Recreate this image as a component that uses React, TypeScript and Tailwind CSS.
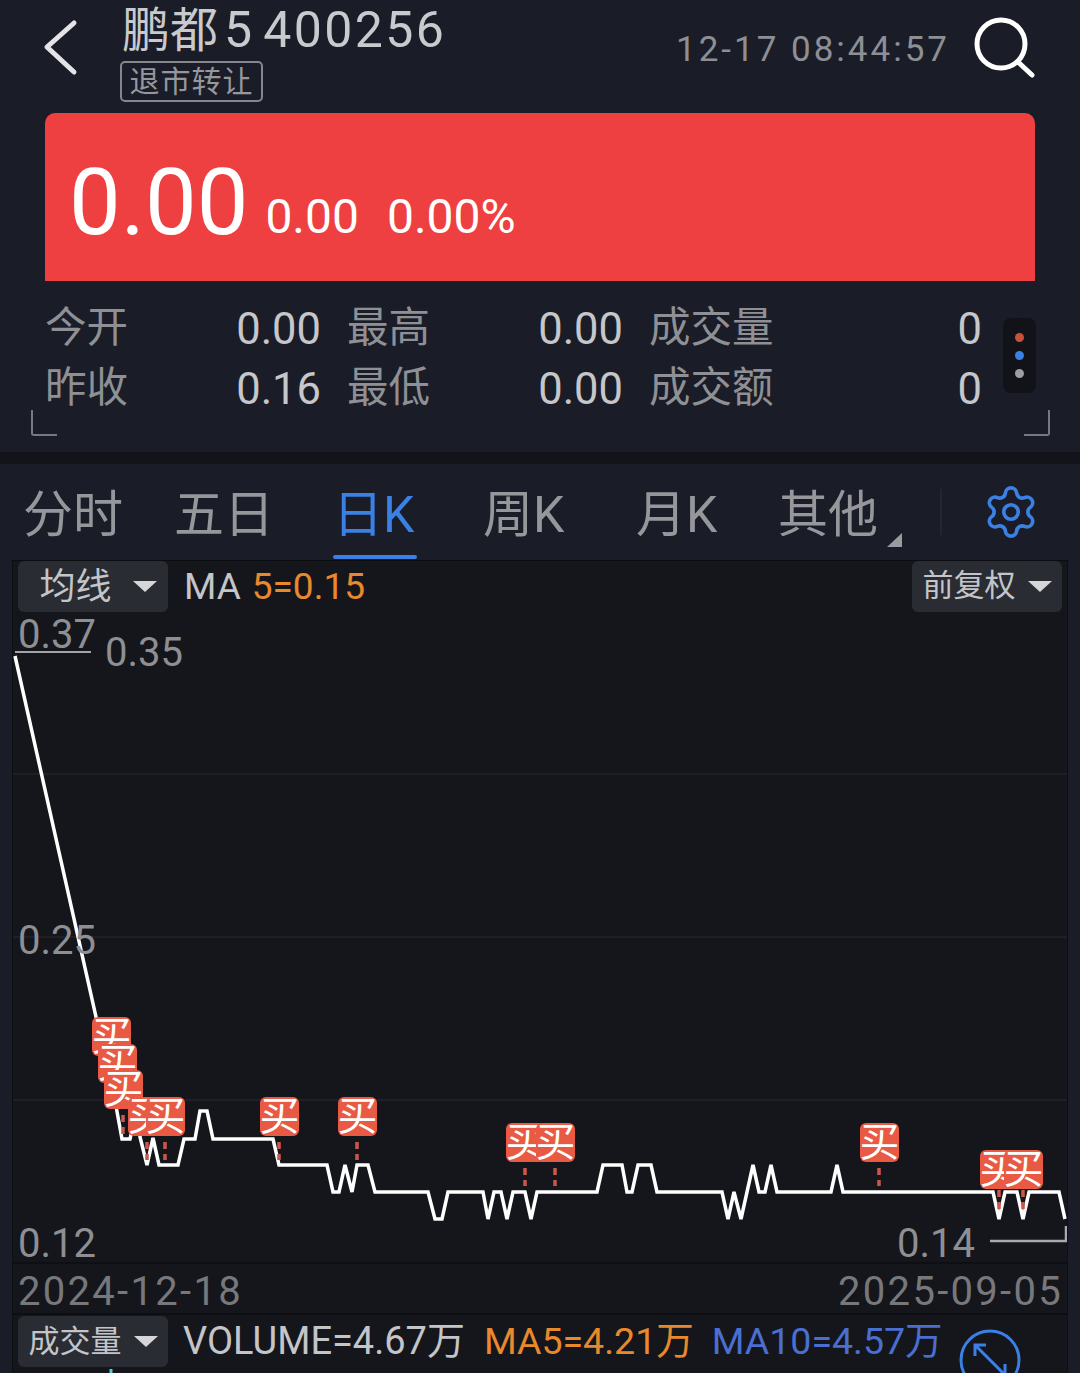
import { Settings } from 'lucide-react';

const CJK = "font-['Roboto','Noto_Sans_CJK_SC',sans-serif]";

// Chart origin on the page; all chart data below is written in page pixels.
const ORIGIN_X = 13;
const ORIGIN_Y = 561;

const LINE =
  '15,656 116,1106 122,1139 130,1139 136,1111 140,1137 147,1165 153,1138 159,1165 178,1165 184,1139 195,1139 200,1111 207,1111 213,1139 273,1139 279,1165 327,1165 333,1192 339,1192 345,1165 352,1192 357,1165 368,1165 375,1192 428,1192 435,1219 442,1219 448,1192 483,1192 488,1219 494,1192 501,1192 507,1219 513,1192 525,1192 531,1219 537,1192 597,1192 603,1165 622,1165 627,1192 632,1192 638,1165 651,1165 657,1192 722,1192 728,1219 734,1192 741,1219 753,1165 759,1192 765,1192 771,1165 777,1192 831,1192 837,1165 843,1192 993,1192 999,1219 1005,1192 1017,1192 1023,1219 1029,1192 1059,1192 1065,1219';

const BUY_MARKERS = [
  { x: 92, y: 1017 },
  { x: 98, y: 1044 },
  { x: 104, y: 1070 },
  { x: 128, y: 1097 },
  { x: 146, y: 1097 },
  { x: 260, y: 1097 },
  { x: 338, y: 1097 },
  { x: 506, y: 1123 },
  { x: 536, y: 1123 },
  { x: 860, y: 1123 },
  { x: 980, y: 1150 },
  { x: 1004, y: 1150 },
];

const BUY_STEMS = [
  { x: 123, y1: 1115, y2: 1136 },
  { x: 147, y1: 1142, y2: 1160 },
  { x: 165, y1: 1142, y2: 1160 },
  { x: 279, y1: 1142, y2: 1160 },
  { x: 357, y1: 1142, y2: 1160 },
  { x: 525, y1: 1168, y2: 1186 },
  { x: 555, y1: 1168, y2: 1186 },
  { x: 879, y1: 1168, y2: 1186 },
  { x: 999, y1: 1190, y2: 1214 },
  { x: 1023, y1: 1190, y2: 1214 },
];

const TABS = [
  { label: '分时', className: 'ml-[23px] w-[100px] text-[#96979b]' },
  { label: '五日', className: 'ml-[51px] w-[97px] text-[#96979b]' },
  { label: '日K', className: 'ml-[62px] w-[85px] text-[#3a80e5]' },
  { label: '周K', className: 'ml-[65px] w-[86px] text-[#96979b]' },
  { label: '月K', className: 'ml-[67px] w-[85px] text-[#96979b]' },
  { label: '其他', className: 'ml-[57px] w-[100px] text-[#96979b]' },
];

function Caret({ className }: { className: string }) {
  return <span className={`h-0 w-0 border-x-[12px] border-t-[11px] border-x-transparent border-t-[#d6d6d8] ${className}`} />;
}

function Pill({ label, className, caretClass }: { label: string; className: string; caretClass: string }) {
  return (
    <div className={`flex h-[51px] w-[150px] items-center justify-center rounded-md bg-[#2a2c33] whitespace-nowrap text-[#c4c5c8] ${className}`}>
      {label}
      <Caret className={caretClass} />
    </div>
  );
}

function StatRow({ cells, value }: { cells: string[]; value: string }) {
  return (
    <div className="flex h-[60px] items-center whitespace-nowrap">
      <span className="w-[83px] text-[41.5px] text-[#8f9095]">{cells[0]}</span>
      <span className="w-[193px] pt-[4px] text-right text-[43.5px] text-[#c6c7ca]">{cells[1]}</span>
      <span className="ml-[26px] w-[83px] text-[41.5px] text-[#8f9095]">{cells[2]}</span>
      <span className="w-[193px] pt-[4px] text-right text-[43.5px] text-[#c6c7ca]">{cells[3]}</span>
      <span className="ml-[26px] w-[124px] text-[41.5px] text-[#8f9095]">{cells[4]}</span>
      <span className="w-[209px] pt-[4px] text-right text-[43.5px] text-[#c6c7ca]">{value}</span>
    </div>
  );
}

function ChartDrawing() {
  return (
    <svg
      className="absolute inset-0 h-full w-full"
      viewBox={`${ORIGIN_X} ${ORIGIN_Y} 1054 812`}
      fill="none"
    >
      <path d="M13 774H1067M13 937H1067M13 1100H1067" stroke="#23252b" strokeWidth="1.5" />
      <polyline points={LINE} stroke="#ffffff" strokeWidth="3.5" strokeLinejoin="miter" />
      {BUY_STEMS.map((s) => (
        <line
          key={s.x}
          x1={s.x}
          x2={s.x}
          y1={s.y1}
          y2={s.y2}
          stroke="#c9584b"
          strokeWidth="3.5"
          strokeDasharray="7 5"
        />
      ))}
      <path d="M15 652H91" stroke="#a3a4a8" strokeWidth="2" />
      <path d="M990 1241H1066V1226" stroke="#a9aaad" strokeWidth="2.5" />
      <path d="M111 1369V1373" stroke="#57c7d4" strokeWidth="3" />
    </svg>
  );
}

export default function App() {
  return (
    <div className={`relative flex h-[1373px] w-[1080px] flex-col overflow-hidden bg-[#1a1d27] ${CJK}`}>
      {/* header */}
      <header className="relative flex h-[113px] shrink-0">
        <svg className="mt-[19px] ml-[42px] h-[58px] w-[38px]" viewBox="0 0 38 58" fill="none">
          <path d="M32 4 5 28l27 25" stroke="#e4e4e6" strokeWidth="5" strokeLinecap="round" strokeLinejoin="round" />
        </svg>
        <div className="ml-[42px] flex flex-col items-start">
          <div className="mt-[0px] h-[61px] whitespace-nowrap text-[48px] leading-[60px] text-[#c9cacd]">
            鹏都
            <span className="ml-[6px] text-[50px] tracking-[2.4px] [word-spacing:-6px]">5 400256</span>
          </div>
          <div className="-ml-[2px] flex h-[41px] w-[143px] items-center justify-center rounded-[5px] border-2 border-[#85878d] text-[30px] tracking-[1px] text-[#96979c]">
            退市转让
          </div>
        </div>
        <div className="mt-[29px] ml-auto text-[35px] leading-[42px] tracking-[3px] text-[#8d8f95]">12-17 08:44:57</div>
        <svg className="mt-[16px] mr-[45px] ml-[23px] h-[62px] w-[62px]" viewBox="0 0 62 62" fill="none">
          <circle cx="28" cy="28" r="24" stroke="#ffffff" strokeWidth="5" />
          <path d="M45 46 59 59" stroke="#ffffff" strokeWidth="5" strokeLinecap="round" />
        </svg>
      </header>

      {/* quote card */}
      <section className="mx-[45px] flex h-[168px] shrink-0 items-end rounded-t-[10px] bg-[#ee4040] pb-[32px] pl-[24px] text-white">
        <span className="text-[92px] leading-[92px]">0.00</span>
        <span className="mb-[6px] ml-[17px] text-[48px] leading-[52px]">0.00</span>
        <span className="mb-[6px] ml-[28px] text-[48px] leading-[52px]">0.00%</span>
      </section>

      {/* stats */}
      <section className="relative flex h-[171px] shrink-0 pt-[17px] pl-[45px]">
        <div>
          <StatRow cells={['今开', '0.00', '最高', '0.00', '成交量']} value="0" />
          <StatRow cells={['昨收', '0.16', '最低', '0.00', '成交额']} value="0" />
        </div>
        <div className="mt-[20px] ml-[21px] flex h-[75px] w-[33px] flex-col items-center justify-center gap-[9px] rounded-lg bg-[#111318]">
          <span className="h-[9px] w-[9px] rounded-full bg-[#c9503c]" />
          <span className="h-[9px] w-[9px] rounded-full bg-[#3a80e5]" />
          <span className="h-[9px] w-[9px] rounded-full bg-[#9d9ea2]" />
        </div>
        <span className="absolute bottom-[16px] left-[31px] h-[26px] w-[26px] rounded-bl-[3px] border-b-2 border-l-2 border-[#77797f]" />
        <span className="absolute right-[30px] bottom-[16px] h-[26px] w-[26px] rounded-br-[3px] border-r-2 border-b-2 border-[#77797f]" />
      </section>

      <div className="h-[12px] shrink-0 bg-[#121419]" />

      {/* period tabs */}
      <nav className="relative flex h-[96px] shrink-0 items-center pt-[6px] text-[50px]">
        {TABS.map((tab) => (
          <span key={tab.label} className={`whitespace-nowrap ${tab.className}`}>
            {tab.label}
          </span>
        ))}
        <span className="absolute top-[69px] left-[887px] h-0 w-0 border-b-[14px] border-l-[15px] border-b-[#9a9b9f] border-l-transparent" />
        <span className="absolute top-[91px] left-[333px] h-[4px] w-[84px] rounded-sm bg-[#3a80e5]" />
        <span className="mt-[-6px] ml-[62px] h-[46px] w-[2px] bg-[#24272f]" />
        <Settings className="mt-[-6px] ml-[40px] h-[58px] w-[58px] text-[#3a80e5]" strokeWidth={1.5} />
      </nav>

      {/* k-line panel */}
      <section className="relative mx-[12px] flex flex-1 flex-col border-x border-t border-x-[#0e0f13] border-t-[#0c0d10] bg-[#14161c]">
        <ChartDrawing />
        {BUY_MARKERS.map((m) => (
          <span
            key={`${m.x}-${m.y}`}
            className="absolute flex h-[39px] w-[39px] items-center justify-center rounded-md bg-[#e95a45] text-[40px] leading-none text-white"
            style={{ left: m.x - ORIGIN_X, top: m.y - ORIGIN_Y }}
          >
            买
          </span>
        ))}

        <div className="relative flex h-[703px] shrink-0 flex-col border-b-2 border-b-[#0e0f13]">
          <div className="flex h-[51px] items-center px-[5px]">
            <Pill label="均线" className="pl-[10px] text-[36px]" caretClass="ml-[21px]" />
            <span className="ml-[16px] text-[37px] text-[#c4c5c8]">MA</span>
            <span className="ml-[11px] text-[37px] text-[#e8892c]">5=0.15</span>
            <Pill label="前复权" className="ml-auto text-[31px]" caretClass="ml-[12px]" />
          </div>
          <span className="absolute top-[44px] left-[5px] text-[40px] text-[#8e8f93]">0.37</span>
          <span className="absolute top-[62px] left-[92px] text-[40px] text-[#8e8f93]">0.35</span>
          <span className="absolute top-[350px] left-[5px] text-[40px] text-[#8e8f93]">0.25</span>
          <span className="absolute top-[653px] left-[5px] text-[40px] text-[#8e8f93]">0.12</span>
          <span className="absolute top-[653px] left-[884px] text-[40px] text-[#8e8f93]">0.14</span>
        </div>

        <div className="relative flex h-[51px] shrink-0 items-center justify-between border-b-2 border-b-[#0e0f13] pt-[6px] pr-[4px] pl-[5px] text-[40px] tracking-[2.3px] text-[#77787c]">
          <span>2024-12-18</span>
          <span>2025-09-05</span>
        </div>

        <div className="relative flex h-[58px] items-start pt-[1px] pl-[5px] text-[37.5px] leading-[50px]">
          <Pill label="成交量" className="text-[31px]" caretClass="ml-[12px]" />
          <span className="ml-[15px] whitespace-nowrap text-[38px] text-[#c4c5c8]">VOLUME=4.67万</span>
          <span className="ml-[19px] whitespace-nowrap text-[#e8892c]">MA5=4.21万</span>
          <span className="ml-[18px] whitespace-nowrap text-[#4a6fd0]">MA10=4.57万</span>
          <svg className="absolute top-[14px] left-[946px] h-[62px] w-[62px]" viewBox="0 0 62 62" fill="none">
            <circle cx="31" cy="31" r="29" stroke="#3a80e5" strokeWidth="3" />
            <path d="M16 16 46 46M16 27V16H27M46 35V46H35" stroke="#3a80e5" strokeWidth="3" />
          </svg>
        </div>
      </section>
    </div>
  );
}
